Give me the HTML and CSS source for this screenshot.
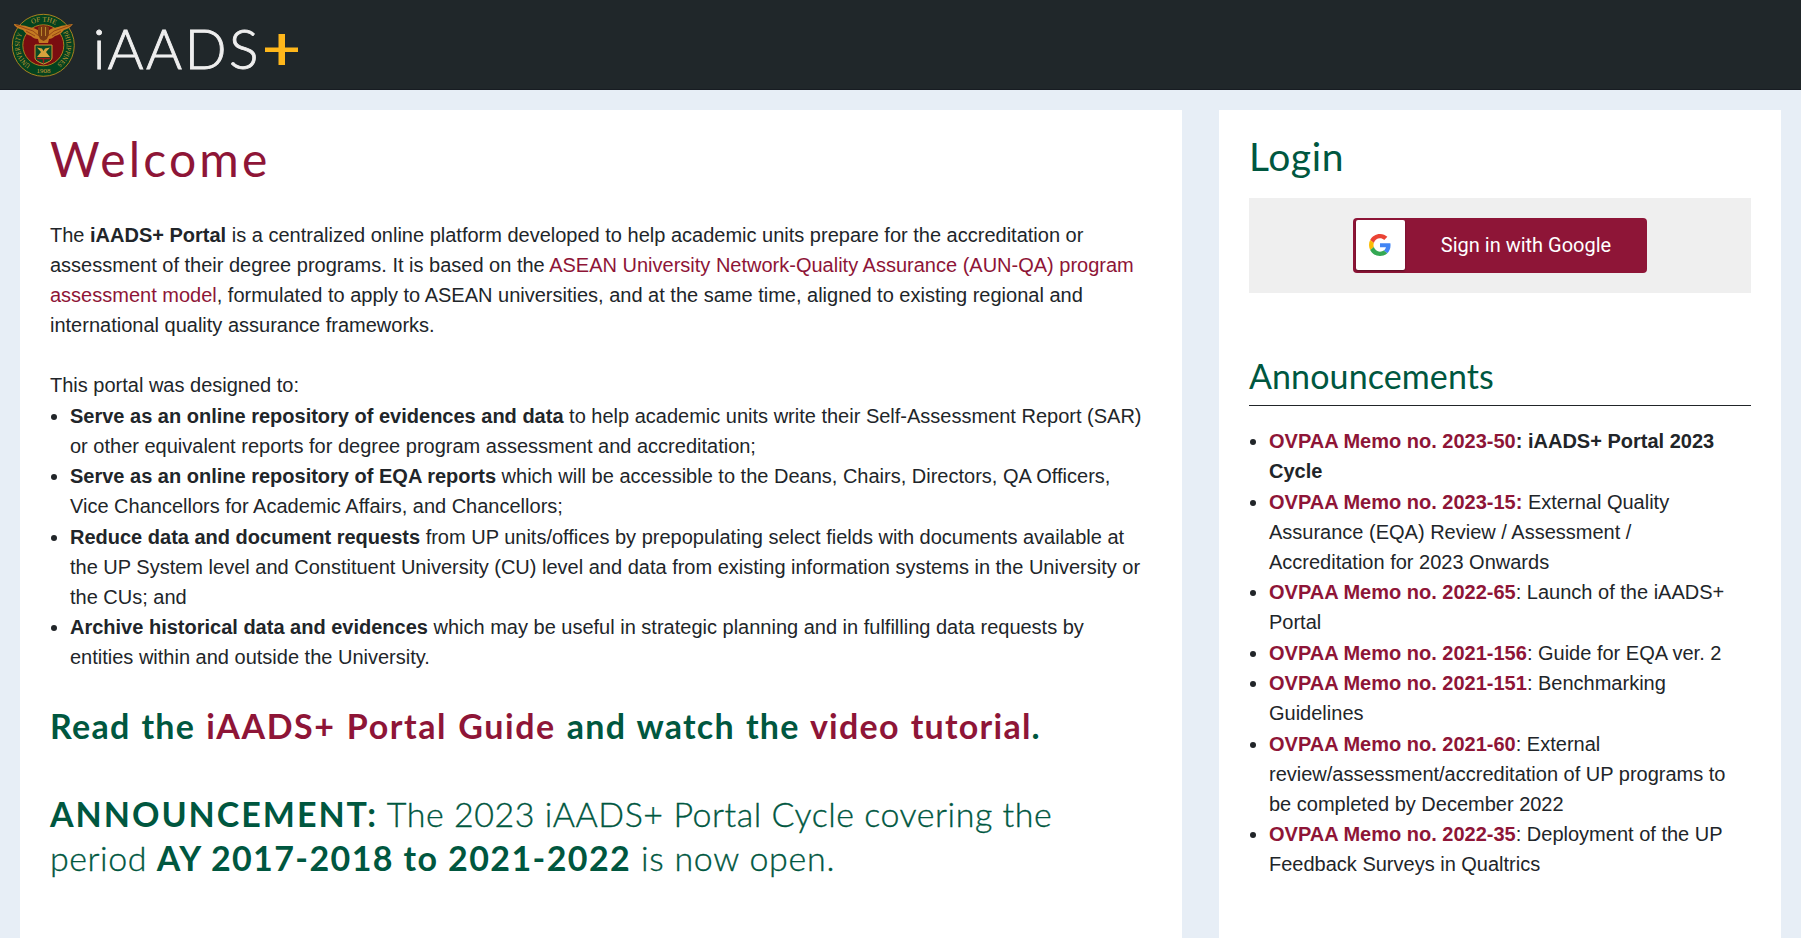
FILE: index.html
```html
<!DOCTYPE html>
<html lang="en">
<head>
<meta charset="utf-8">
<title>iAADS+</title>
<link rel="stylesheet" href="styles.css">
</head>
<body>
<header class="navbar">
  <svg class="seal" viewBox="0 0 64 64" width="64" height="64">
    <defs>
      <path id="arc-top" d="M8.500 32a23.500 23.500 0 0 1 47 0"/>
      <path id="arc-left" d="M19.500 51.900A23.500 23.500 0 0 1 12.100 19.500"/>
      <path id="arc-right" d="M51.900 19.500A23.500 23.500 0 0 1 44.500 51.900"/>
    </defs>
    <circle cx="32.300" cy="32.300" r="31" fill="#04421f" stroke="#a9811f" stroke-width="1"/>
    <circle cx="32.300" cy="32.300" r="20.500" fill="#7a0d10" stroke="#a9811f" stroke-width="1"/>
    <g class="seal-text">
      <text text-anchor="middle"><textPath href="#arc-top" startOffset="51%">OF THE</textPath></text>
      <text><textPath href="#arc-left" textLength="35" lengthAdjust="spacingAndGlyphs">UNIVERSITY</textPath></text>
      <text><textPath href="#arc-right" textLength="35" lengthAdjust="spacingAndGlyphs">PHILIPPINES</textPath></text>
      <text x="32.500" y="60" text-anchor="middle">1908</text>
    </g>
    <path d="M3 11c4 1 10 1 15 3 5 1 8 2 10 4 1-4 3-5 4.500-5s4 1 5 5c2.500-3 5.500-3 9.500-4 5-2 10-2 15-3-3 4-6 5-9 6-3 4-6 5-9 6-2 2-4 3-6 3l-1 4h-9l-1-4c-3 0-5-1-7-3-3-1-5-2-8-6-4-1-6-2-9-5z" fill="#c47a22"/>
    <path d="M27 14l3-1h5l3 1v7l-2 5-3.500 2-3.500-2-2-5z" fill="#7a3a12"/>
    <path d="M30.500 14v9M34.500 14v9" stroke="#c99a35" stroke-width=".8"/>
    <path d="M5 12l17 6 6 5M60 12l-17 6-6 5M15 18l9 5M50 18l-9 5" stroke="#8a3a12" stroke-width=".8" fill="none"/>
    <path d="M24 32h17v13q0 3-8.500 6-8.500-3-8.500-6z" fill="#0a4a26" stroke="#d29a35" stroke-width="1"/>
    <path d="M26 34.500l5 1 1.500 2.500 1.500-2.500 5-1-4 4.500 4 5H26l4-5z" fill="#d8a23c"/>
    <path d="M26 45.500h13M32.500 46v4" stroke="#a1161a" stroke-width="1.500"/>
  </svg>
  <div class="brand"><span class="brand-name">iAADS</span><svg class="plus" viewBox="0 0 33 31" width="33" height="31"><path d="M13.500 0H20v13.500H33v4.500H20V31H13.500V18H0V13.500h13.500z" fill="#ffb71b"/></svg></div>
</header>
<main class="page">
  <section class="panel welcome">
    <h1>Welcome</h1>
    <p>The <b>iAADS+ Portal</b> is a centralized online platform developed to help academic units prepare for the accreditation or assessment of their degree programs. It is based on the <a>ASEAN University Network-Quality Assurance (AUN-QA) program assessment model</a>, formulated to apply to ASEAN universities, and at the same time, aligned to existing regional and international quality assurance frameworks.</p>
    <p class="lead-in">This portal was designed to:</p>
    <ul class="goals">
      <li><b>Serve as an online repository of evidences and data</b> to help academic units write their Self-Assessment Report (SAR) or other equivalent reports for degree program assessment and accreditation;</li>
      <li><b>Serve as an online repository of EQA reports</b> which will be accessible to the Deans, Chairs, Directors, QA Officers, Vice Chancellors for Academic Affairs, and Chancellors;</li>
      <li><b>Reduce data and document requests</b> from UP units/offices by prepopulating select fields with documents available at the UP System level and Constituent University (CU) level and data from existing information systems in the University or the CUs; and</li>
      <li><b>Archive historical data and evidences</b> which may be useful in strategic planning and in fulfilling data requests by entities within and outside the University.</li>
    </ul>
    <h2 class="guide">Read the <a class="guide-link">iAADS+ Portal Guide</a> and watch the <a>video tutorial</a>.</h2>
    <h2 class="notice"><b class="notice-label">ANNOUNCEMENT:</b> The 2023 iAADS+ Portal Cycle covering the<br>period <b>AY 2017-2018 to 2021-2022</b> <span class="notice-end">is now open.</span></h2>
  </section>
  <aside class="panel side">
    <h2 class="login">Login</h2>
    <div class="login-box">
      <button class="google">
        <span class="google-icon"><svg viewBox="0 0 48 48" width="22" height="22"><path fill="#EA4335" d="M24 9.500c3.540 0 6.710 1.220 9.210 3.600l6.850-6.850C35.900 2.380 30.470 0 24 0 14.620 0 6.510 5.380 2.560 13.220l7.980 6.190C12.430 13.720 17.740 9.500 24 9.500z"/><path fill="#4285F4" d="M46.980 24.550c0-1.570-.15-3.090-.38-4.550H24v9.020h12.940c-.58 2.960-2.260 5.480-4.780 7.180l7.730 6c4.510-4.180 7.090-10.360 7.090-17.650z"/><path fill="#FBBC05" d="M10.530 28.590c-.48-1.450-.76-2.990-.76-4.590s.27-3.140.76-4.590l-7.980-6.190C.92 16.460 0 20.120 0 24c0 3.880.92 7.540 2.560 10.780l7.970-6.190z"/><path fill="#34A853" d="M24 48c6.480 0 11.930-2.130 15.890-5.810l-7.730-6c-2.150 1.450-4.920 2.300-8.160 2.300-6.260 0-11.570-4.220-13.470-9.910l-7.980 6.190C6.510 42.620 14.620 48 24 48z"/></svg></span>
        <span class="google-label">Sign in with Google</span>
      </button>
    </div>
    <h3 class="ann">Announcements</h3>
    <ul class="memos">
      <li><b><a>OVPAA Memo no. 2023-50</a>: iAADS+ Portal 2023 Cycle</b></li>
      <li><b><a>OVPAA Memo no. 2023-15:</a></b> External Quality Assurance (EQA) Review / Assessment / Accreditation for 2023 Onwards</li>
      <li><b><a>OVPAA Memo no. 2022-65</a></b>: Launch of the iAADS+ Portal</li>
      <li><b><a>OVPAA Memo no. 2021-156</a></b>: Guide for EQA ver. 2</li>
      <li><b><a>OVPAA Memo no. 2021-151</a></b>: Benchmarking Guidelines</li>
      <li><b><a>OVPAA Memo no. 2021-60</a></b>: External review/assessment/accreditation of UP programs to be completed by December 2022</li>
      <li><b><a>OVPAA Memo no. 2022-35</a></b>: Deployment of the UP Feedback Surveys in Qualtrics</li>
    </ul>
  </aside>
</main>
</body>
</html>
```
FILE: styles.css
```css
* { box-sizing: border-box; }
body {
  margin: 0;
  height: 100vh;
  overflow: hidden;
  display: flex;
  flex-direction: column;
  background: #e7eef6;
  color: #212529;
  font: 20px/30px "Liberation Sans", Arial, sans-serif;
}
.navbar {
  flex: none;
  height: 90px;
  padding-left: 11px;
  display: flex;
  align-items: center;
  background: #20272a;
  border-bottom: 1px solid #171c22;
}
.seal { display: block; flex: none; margin-top: 1px; }
.seal-text { font: 7px "Liberation Serif", serif; fill: #c99a35; }
.brand { display: flex; align-items: center; margin-left: 18px; }
.brand-name {
  width: 172px;
  padding-top: 7px;
  font: 300 55px/60px Lato, sans-serif;
  letter-spacing: 2.5px;
  color: #eee;
  -webkit-text-stroke: .9px #eee;
}
.plus { margin-top: 10px; }
.page {
  flex: 1;
  display: grid;
  grid-template-columns: 1162px 562px;
  column-gap: 37px;
  padding: 20px 20px 0;
}
.panel { background: #fff; padding: 19px 30px; }
p { margin: 0 0 30px; }
.lead-in { margin: 0 0 1px; }
a { color: #8e1537; }
ul { margin: 0; padding-left: 20px; }
.goals li { padding-bottom: .4px; }
.memos li { padding-bottom: .5px; }
h1, h2, h3 { margin: 0; font-family: Lato, sans-serif; font-weight: 400; color: #00573f; }
h1 { font-size: 48px; line-height: 58px; letter-spacing: 3.2px; color: #8e1537; padding-top: 1px; margin-bottom: 32px; }
.guide {
  font-weight: 700;
  font-size: 34px;
  line-height: 44px;
  letter-spacing: 1.25px;
  word-spacing: 1.5px;
  margin-top: 31px;
  margin-bottom: 44px;
}
.guide-link { letter-spacing: 1.55px; }
.notice {
  font-size: 34px;
  line-height: 44px;
  font-weight: 300;
  letter-spacing: .53px;
  white-space: nowrap;
  -webkit-text-stroke: .35px #00573f;
}
.notice b { font-weight: 700; letter-spacing: 1.4px; -webkit-text-stroke: 0; }
.notice .notice-label { letter-spacing: 1.98px; }
.notice-end { letter-spacing: .75px; }
.login { font-size: 39px; line-height: 48px; letter-spacing: .6px; margin: 3px 0 18px; }
.login-box {
  height: 95px;
  background: #efefef;
  display: flex;
  justify-content: center;
  align-items: center;
}
.google {
  width: 294px;
  height: 55px;
  padding: 2px 3px;
  border: 0;
  border-radius: 4px;
  background: #8e1537;
  color: #fff;
  display: flex;
  align-items: flex-start;
}
.google-icon {
  width: 49px;
  height: 50px;
  padding-right: 1px;
  background: #fff;
  border-radius: 2px;
  box-shadow: 0 1px 2px rgba(0, 0, 0, .4);
  display: flex;
  align-items: center;
  justify-content: center;
}
.google-label { flex: 1; padding-left: 3px; text-align: center; font: 20px/51px Roboto, sans-serif; }
.ann { font-size: 34px; line-height: 44px; letter-spacing: .1px; padding-bottom: 7px; border-bottom: 1px solid #212529; margin: 61px 0 20.050px; }
```
